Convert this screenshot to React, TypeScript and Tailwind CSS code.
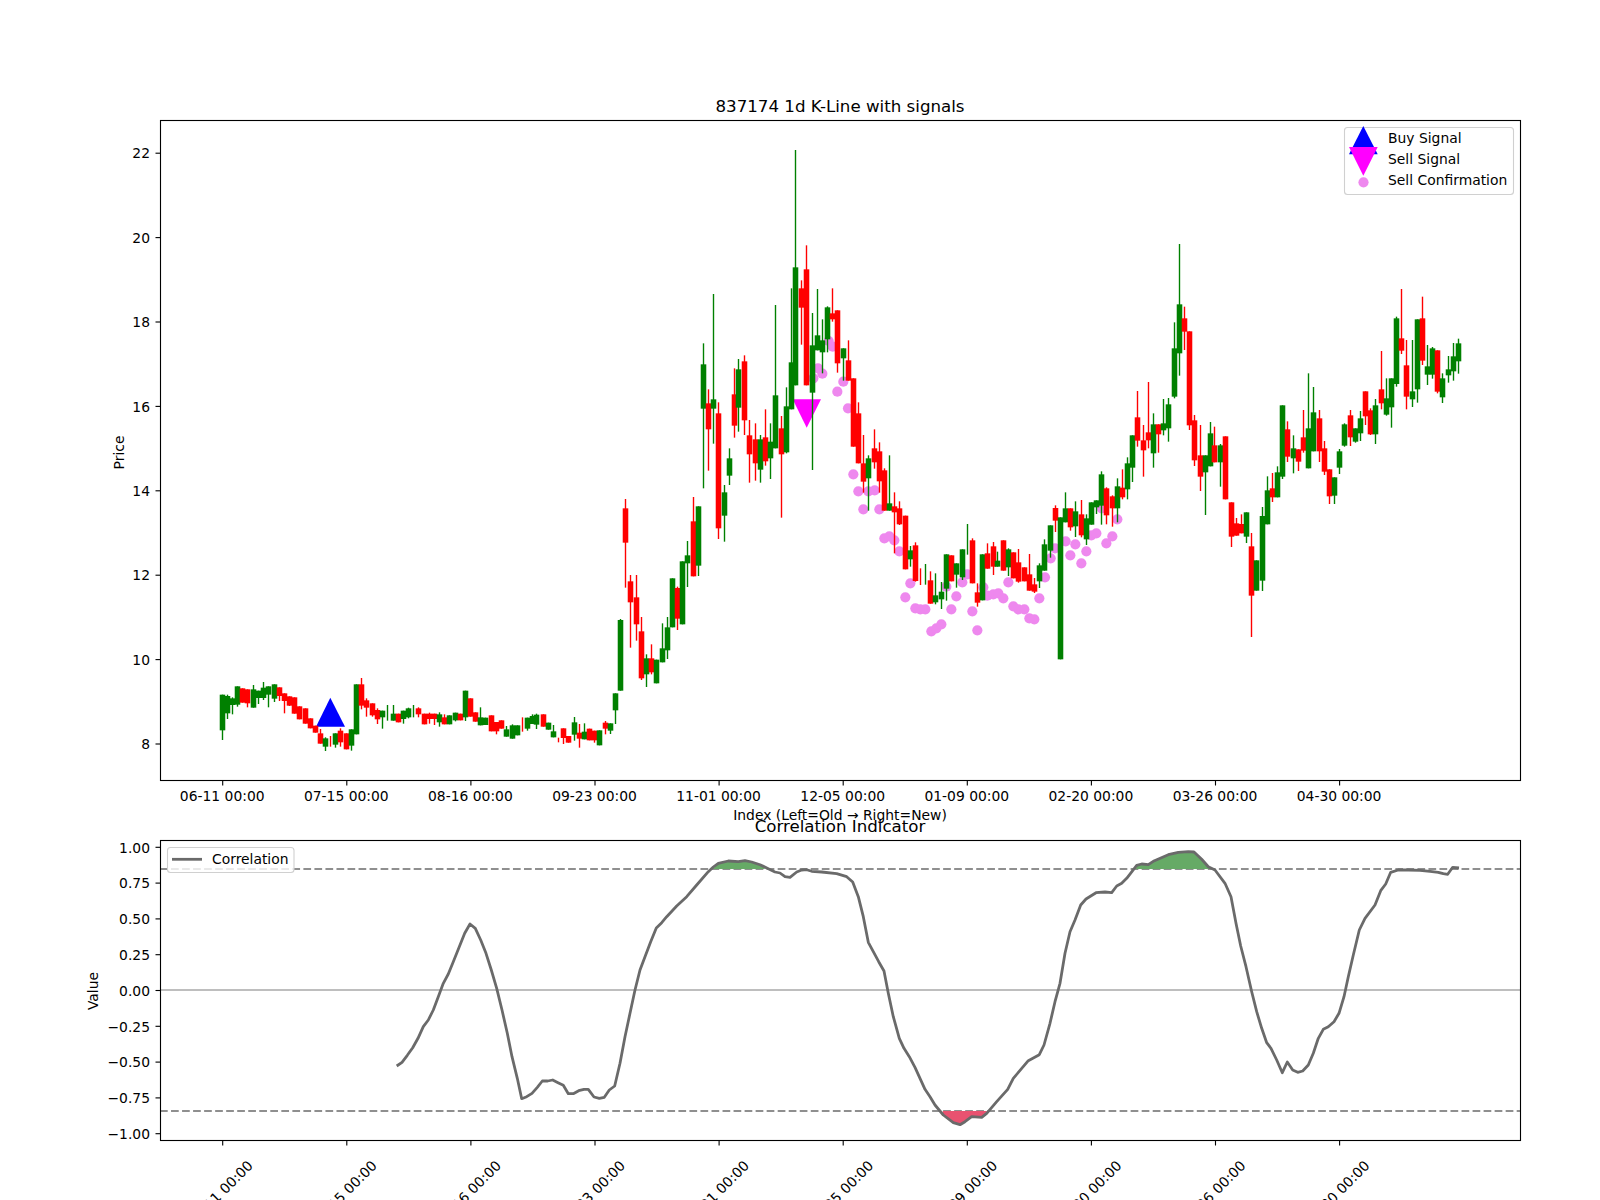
type Row = [string, number, number, number, number, number];
type Candle = { x: number; c: string; wt: number; wb: number; bt: number; bb: number };

const seg = (ox: number, oy: number, rows: Row[]): Candle[] =>
  rows.map(([c, x, bt, bb, wt, wb]) => ({
    x: Math.floor(ox + x / 3) + 0.5,
    c: c === "g" ? "#008000" : "#ff0000",
    wt: oy + wt / 3,
    wb: oy + wb / 3,
    bt: oy + bt / 3,
    bb: oy + bb / 3,
  }));

const candles: Candle[] = [
  ...seg(150, 620, [
    ["g", 216, 224, 331, 224, 360], ["g", 231, 228, 280, 224, 297], ["g", 246, 235, 255, 232, 283],
    ["g", 261, 199, 254, 199, 260], ["r", 278, 205, 248, 205, 248], ["r", 293, 208, 250, 208, 262],
    ["g", 309, 208, 263, 195, 263], ["g", 325, 212, 234, 212, 252], ["g", 340, 203, 234, 186, 240],
    ["g", 354, 199, 224, 199, 262], ["g", 372, 193, 236, 193, 246], ["r", 387, 202, 228, 202, 243],
    ["r", 402, 220, 243, 220, 280], ["r", 417, 229, 257, 229, 258], ["r", 432, 232, 281, 232, 281],
    ["r", 447, 259, 298, 259, 298], ["r", 465, 265, 311, 265, 311], ["r", 480, 295, 325, 295, 325],
    ["r", 495, 317, 338, 317, 338], ["r", 510, 340, 371, 327, 371], ["g", 525, 355, 380, 352, 393],
    ["r", 541, 360, 360, 348, 380], ["g", 557, 340, 374, 340, 383], ["r", 572, 332, 367, 325, 380],
    ["r", 588, 340, 388, 340, 388], ["g", 603, 328, 377, 328, 392], ["g", 618, 193, 343, 193, 343],
    ["r", 633, 193, 257, 174, 268], ["r", 650, 241, 263, 235, 290], ["r", 666, 250, 286, 250, 290],
    ["r", 681, 270, 298, 265, 312], ["g", 696, 272, 292, 272, 326], ["g", 712, 280, 280, 255, 302],
    ["g", 729, 281, 302, 255, 302], ["r", 744, 281, 307, 281, 307], ["g", 759, 272, 297, 272, 311],
    ["g", 774, 265, 292, 263, 295], ["g", 789, 270, 270, 255, 292], ["r", 804, 265, 283, 262, 292],
    ["r", 822, 281, 313, 281, 313], ["r", 837, 281, 297, 278, 311], ["r", 852, 281, 297, 281, 315],
    ["g", 867, 283, 307, 277, 320], ["r", 882, 292, 313, 283, 313], ["g", 897, 286, 313, 286, 313],
    ["g", 915, 278, 301, 278, 304], ["r", 930, 281, 301, 281, 301], ["g", 945, 212, 292, 212, 303],
    ["r", 960, 235, 290, 235, 290], ["r", 975, 277, 305, 277, 305], ["g", 990, 292, 316, 262, 316],
    ["g", 1007, 293, 315, 293, 315], ["r", 1023, 286, 334, 286, 334], ["r", 1038, 306, 334, 306, 343],
    ["r", 1053, 301, 326, 301, 326], ["g", 1068, 328, 350, 318, 350], ["g", 1086, 316, 356, 313, 356],
    ["g", 1101, 316, 346, 316, 346], ["r", 1117, 310, 310, 292, 335], ["g", 1131, 293, 326, 293, 332],
    ["g", 1146, 288, 312, 283, 312], ["g", 1160, 284, 314, 281, 327], ["r", 1179, 283, 320, 283, 320],
    ["g", 1194, 308, 329, 308, 329], ["g", 1209, 334, 352, 315, 352], ["r", 1225, 360, 360, 353, 367],
    ["r", 1240, 325, 354, 325, 372], ["r", 1254, 348, 368, 348, 368], ["g", 1272, 307, 344, 291, 362],
    ["r", 1288, 338, 356, 312, 383], ["g", 1302, 335, 358, 310, 358], ["r", 1317, 326, 361, 326, 361],
    ["r", 1332, 332, 361, 332, 368], ["g", 1347, 331, 376, 331, 376], ["r", 1365, 308, 326, 303, 343],
    ["g", 1380, 310, 332, 310, 342], ["g", 1395, 220, 271, 220, 312],
  ]),
  ...seg(540, 400, [
    ["g", 240, 660, 872, 657, 872], ["r", 255, 325, 428, 297, 563], ["r", 270, 544, 607, 525, 743],
    ["r", 288, 592, 673, 525, 722], ["r", 303, 694, 835, 651, 840], ["g", 318, 775, 823, 763, 861],
    ["r", 333, 775, 817, 733, 823], ["g", 348, 779, 850, 779, 850], ["g", 366, 745, 787, 670, 787],
    ["g", 381, 682, 751, 651, 777], ["g", 396, 535, 682, 535, 682], ["r", 411, 564, 656, 560, 690],
    ["g", 426, 484, 673, 484, 673], ["g", 441, 466, 490, 423, 561], ["r", 459, 364, 529, 291, 529],
    ["g", 474, 319, 497, 319, 528],
  ]),
  ...seg(640, 130, [
    ["g", 189, 703, 836, 640, 1075], ["r", 204, 820, 898, 778, 1022], ["g", 220, 808, 836, 492, 941],
    ["r", 234, 850, 1195, 817, 1227], ["g", 253, 1087, 1157, 1065, 1235], ["g", 267, 985, 1037, 955, 1065],
    ["r", 282, 793, 887, 715, 923], ["g", 296, 718, 833, 687, 905], ["r", 312, 694, 871, 676, 915],
    ["r", 327, 916, 973, 870, 1058], ["r", 345, 928, 1000, 880, 1052], ["g", 360, 928, 1019, 915, 1058],
    ["r", 375, 922, 994, 838, 1007], ["g", 390, 935, 985, 880, 1047], ["g", 405, 796, 955, 525, 955],
    ["r", 423, 895, 973, 858, 1163], ["g", 438, 829, 967, 772, 970], ["g", 453, 697, 838, 475, 838],
    ["g", 467, 412, 766, 60, 766], ["r", 483, 475, 533, 451, 644], ["r", 498, 418, 766, 346, 766],
    ["g", 516, 646, 788, 549, 1020], ["g", 531, 616, 661, 477, 661], ["g", 546, 631, 667, 568, 730],
    ["g", 561, 532, 628, 529, 667], ["r", 576, 550, 568, 475, 575], ["r", 591, 541, 700, 541, 728],
    ["g", 609, 655, 685, 655, 752], ["r", 624, 691, 752, 631, 752],
  ]),
  ...seg(840, 400, [
    ["r", 39, -65, 140, -65, 140], ["r", 54, 40, 190, 7, 190], ["r", 69, 190, 245, 105, 278],
    ["g", 84, 175, 235, 166, 332], ["r", 102, 145, 187, 88, 206], ["r", 117, 154, 244, 127, 278],
    ["r", 132, 211, 332, 205, 332], ["g", 147, 310, 332, 166, 332], ["r", 162, 319, 337, 277, 460],
    ["r", 177, 325, 373, 304, 375], ["r", 195, 347, 508, 347, 508], ["g", 210, 451, 478, 438, 500],
    ["r", 225, 436, 543, 427, 545], ["r", 241, 530, 530, 505, 555], ["g", 256, 520, 520, 492, 554],
    ["r", 272, 541, 611, 514, 611], ["g", 287, 586, 607, 520, 613], ["g", 303, 575, 598, 546, 627],
    ["g", 318, 463, 566, 463, 602], ["r", 333, 466, 544, 466, 544], ["g", 348, 490, 524, 490, 563],
    ["g", 366, 448, 532, 448, 540], ["g", 381, 420, 420, 372, 464], ["r", 396, 421, 550, 415, 550],
    ["r", 411, 577, 608, 550, 620], ["g", 426, 463, 601, 463, 601], ["r", 441, 460, 506, 430, 506],
    ["r", 459, 439, 500, 426, 525], ["g", 473, 482, 500, 455, 500], ["r", 489, 421, 512, 421, 512],
    ["g", 504, 448, 502, 445, 528], ["r", 519, 457, 535, 457, 535], ["r", 534, 487, 545, 447, 548],
    ["r", 552, 502, 544, 502, 544], ["r", 567, 523, 572, 462, 572], ["r", 582, 553, 575, 534, 579],
    ["g", 597, 496, 544, 490, 564], ["g", 612, 433, 512, 418, 512], ["g", 630, 376, 452, 376, 473],
    ["r", 645, 324, 362, 316, 396], ["g", 660, 352, 778, 352, 778], ["g", 675, 325, 367, 277, 367],
    ["r", 690, 325, 382, 325, 392], ["g", 705, 334, 379, 304, 411], ["r", 723, 343, 406, 300, 412],
    ["g", 738, 355, 418, 343, 435], ["g", 753, 307, 374, 307, 374], ["g", 768, 301, 322, 301, 342],
    ["g", 783, 223, 317, 214, 374], ["r", 798, 265, 346, 262, 373], ["r", 816, 289, 325, 286, 380],
    ["g", 831, 259, 325, 235, 367], ["r", 846, 263, 292, 208, 298], ["g", 861, 190, 268, 172, 298],
    ["g", 876, 106, 203, 106, 246],
  ]),
  ...seg(1130, 380, [
    ["r", 21, 112, 182, 33, 200], ["r", 39, 181, 211, 135, 290], ["r", 54, 157, 181, 6, 205],
    ["g", 69, 133, 220, 100, 263], ["r", 84, 133, 163, 133, 218], ["g", 99, 130, 151, 57, 166],
    ["g", 114, 73, 145, 54, 185], ["g", 132, -95, 50, -173, 55], ["g", 147, -227, -80, -408, -13],
    ["r", 162, -185, -145, -220, -90], ["r", 177, -146, 136, -146, 150], ["r", 192, 121, 241, 105, 258],
    ["r", 210, 226, 290, 135, 333], ["g", 225, 226, 277, 226, 405], ["g", 240, 160, 259, 126, 259],
    ["r", 254, 196, 247, 140, 247], ["g", 270, 196, 247, 192, 320], ["r", 285, 169, 358, 169, 358],
    ["r", 303, 367, 470, 367, 501], ["r", 318, 430, 467, 414, 467], ["r", 333, 432, 460, 403, 460],
    ["g", 348, 397, 470, 397, 489], ["r", 363, 499, 647, 459, 771], ["g", 378, 541, 632, 541, 632],
    ["g", 396, 408, 602, 381, 633], ["g", 411, 331, 433, 289, 433], ["r", 426, 325, 352, 279, 366],
    ["g", 441, 277, 352, 259, 352], ["g", 456, 76, 290, 76, 297], ["r", 471, 148, 230, 124, 246],
    ["g", 489, 205, 235, 166, 280], ["r", 504, 208, 245, 208, 273], ["r", 519, 172, 212, 90, 218],
    ["g", 534, 145, 265, -20, 265], ["g", 549, 97, 214, 21, 214], ["r", 567, 115, 214, 90, 246],
    ["r", 582, 205, 275, 183, 285], ["r", 597, 268, 349, 268, 372], ["g", 612, 292, 347, 292, 372],
    ["g", 627, 214, 263, 207, 282], ["g", 642, 133, 197, 130, 200], ["r", 660, 106, 172, 90, 198],
    ["g", 675, 145, 185, 145, 188], ["g", 690, 115, 160, 93, 183], ["r", 705, 34, 109, 34, 135],
    ["r", 720, 91, 163, 85, 165], ["g", 735, 76, 163, 57, 192], ["r", 753, 28, 70, -87, 88],
    ["g", 768, 55, 104, -5, 107], ["g", 783, -5, 82, -5, 143], ["g", 798, -185, 12, -190, 20],
    ["r", 813, -125, -88, -273, -78], ["r", 828, -44, 50, -120, 88], ["g", 846, 34, 58, -120, 81],
    ["g", 861, -182, 28, -182, 68], ["r", 876, -185, -58, -250, -45], ["g", 891, -41, -16, -105, 15],
    ["g", 906, -95, -16, -99, -4], ["r", 921, -89, 35, -89, 40], ["g", 938, -5, 52, -20, 69],
    ["g", 954, -32, -14, -72, 8], ["g", 969, -71, -26, -111, 2], ["g", 984, -110, -56, -124, -19],
  ]),
];

const pts = (ox: number, oy: number, raw: number[][]) => raw.map(([x, y]) => [ox + x / 3, oy + y / 3]);

const dots = [
  ...pts(640, 130, [[520, 745], [534, 715], [547, 731], [566, 633], [578, 650], [610, 755], [592, 785]]),
  ...pts(840, 400, [
    [24, 25], [40, 223], [55, 274], [85, 274], [104, 271], [70, 328], [118, 328], [133, 415], [148, 409], [163, 421],
    [178, 454], [211, 550], [196, 592], [226, 625], [241, 628], [256, 628], [274, 694], [289, 685], [304, 673], [319, 560],
    [349, 589], [334, 628], [367, 547], [382, 523], [397, 634], [412, 691], [430, 562], [442, 587], [460, 583], [475, 580],
    [490, 595], [505, 547], [520, 619], [535, 628], [553, 628], [568, 655], [583, 658], [598, 595], [615, 532], [632, 475],
    [645, 445], [677, 424], [691, 466], [706, 433], [724, 490], [739, 454], [754, 406], [769, 400], [785, 325], [799, 430],
    [817, 409], [832, 358],
  ]),
];

const line1 = pts(80, 820, [
  [950, 738], [966, 727], [982, 706], [998, 683], [1014, 655], [1030, 620], [1045, 600], [1060, 570], [1075, 530], [1090, 490],
  [1105, 462], [1120, 425], [1138, 380], [1154, 340], [1170, 312], [1186, 325], [1202, 360], [1218, 400], [1234, 450], [1250, 505],
  [1266, 570], [1282, 640], [1296, 710], [1312, 775], [1325, 836], [1340, 830], [1356, 820], [1372, 802], [1387, 783], [1403, 783],
  [1418, 780], [1434, 788], [1450, 796], [1465, 821], [1480, 821], [1496, 812],
]);
const line2 = pts(580, 820, [
  [12, 808], [25, 808], [42, 831], [58, 835], [73, 832], [88, 810], [104, 798], [120, 730], [135, 650], [150, 580],
  [165, 510], [180, 450], [195, 410], [212, 365], [229, 324], [245, 308], [260, 290], [290, 258], [320, 230], [350, 195],
  [385, 155], [400, 141], [415, 130], [445, 123], [475, 125], [495, 122], [515, 126], [540, 134], [565, 146], [585, 156],
  [600, 159], [615, 170], [630, 172], [650, 156], [665, 150], [680, 149], [695, 154], [725, 156], [770, 161], [800, 170],
  [818, 186], [835, 230], [850, 290], [865, 367], [880, 395], [896, 425], [912, 453], [925, 520], [940, 590], [958, 655],
  [972, 685], [988, 710], [1005, 742], [1035, 808], [1050, 830], [1065, 855], [1090, 885], [1120, 908], [1140, 914], [1155, 905],
  [1175, 890], [1205, 892], [1220, 880], [1250, 845], [1283, 808], [1300, 775], [1345, 722], [1378, 704], [1392, 675], [1410, 610],
  [1425, 545],
]);
const line3 = pts(1060, 820, [
  [0, 490], [15, 400], [30, 335], [45, 300], [62, 255], [78, 237], [108, 218], [135, 216], [155, 218], [170, 198],
  [185, 190], [200, 175], [230, 136], [245, 132], [265, 134], [280, 124], [325, 104], [355, 97], [385, 95], [402, 96],
  [425, 118], [445, 140], [465, 150], [495, 190], [513, 230], [528, 310], [542, 378], [558, 440], [575, 515], [590, 575],
  [605, 625], [620, 668], [633, 685], [650, 720], [667, 758], [682, 726], [698, 750], [713, 757], [728, 753], [745, 735],
  [760, 700], [775, 655], [790, 628], [805, 620], [822, 605], [837, 580], [852, 530], [865, 470], [880, 405], [898, 330],
  [915, 295], [945, 255], [962, 212], [977, 192], [992, 157], [1015, 150], [1045, 150], [1080, 151], [1110, 154], [1135, 157],
  [1150, 161], [1163, 163], [1178, 142], [1197, 144],
]);
const corr = [...line1, ...line2, ...line3];
const toStr = (p: number[][]) => p.map((q) => `${q[0].toFixed(1)},${q[1].toFixed(1)}`).join(" ");

const fillG1 = pts(580, 820, [[398, 147], [415, 130], [445, 123], [475, 125], [495, 122], [515, 126], [540, 134], [556, 147]]);
const fillR = pts(580, 820, [[1088, 873], [1090, 885], [1120, 908], [1140, 914], [1155, 905], [1175, 890], [1205, 892], [1222, 873]]);
const fillG2 = pts(1060, 820, [[228, 147], [230, 136], [245, 132], [265, 134], [280, 124], [325, 104], [355, 97], [385, 95], [402, 96], [425, 118], [445, 140], [455, 147]]);

const ticksX = [222.7, 346.8, 470.9, 595, 719.1, 843.2, 967.3, 1091.4, 1215.5, 1339.6];
const labels = ["06-11 00:00", "07-15 00:00", "08-16 00:00", "09-23 00:00", "11-01 00:00", "12-05 00:00", "01-09 00:00", "02-20 00:00", "03-26 00:00", "04-30 00:00"];
const priceTicks = [8, 10, 12, 14, 16, 18, 20, 22];
const valueTicks = ["1.00", "0.75", "0.50", "0.25", "0.00", "−0.25", "−0.50", "−0.75", "−1.00"];

export default function App() {
  return (
    <div className="flex flex-col w-[1600px] h-[1200px] bg-white overflow-hidden font-['DejaVu_Sans',sans-serif] text-black">
      <svg width={1600} height={820} viewBox="0 0 1600 820" className="block shrink-0 overflow-visible">
        <text x={840} y={111.5} textAnchor="middle" className="text-[16.67px]">837174 1d K-Line with signals</text>
        {dots.map((d, i) => (
          <circle key={i} cx={d[0]} cy={d[1]} r={5.1} fill="#ee88ee" />
        ))}
        <polygon points="330.3,697.7 316,726.7 345,726.7" fill="#0000ff" />
        <polygon points="792.7,399.3 821,399.3 806.7,427.7" fill="#ff00ff" />
        {candles.map((k, i) => (
          <g key={i}>
            <line x1={k.x} x2={k.x} y1={k.wt} y2={k.wb} stroke={k.c} strokeWidth={1.39} />
            {k.bb > k.bt && <rect x={k.x - 2.78} y={k.bt} width={5.56} height={k.bb - k.bt} fill={k.c} />}
          </g>
        ))}
        <rect x={160.5} y={120.5} width={1360} height={660} fill="none" stroke="#000" strokeWidth={1.11} />
        {ticksX.map((x, i) => (
          <g key={i}>
            <line x1={x} x2={x} y1={781} y2={785.5} stroke="#000" strokeWidth={1.11} />
            <text x={x - 0.5} y={801} textAnchor="middle" className="text-[13.89px]">{labels[i]}</text>
          </g>
        ))}
        {priceTicks.map((p) => {
          const y = 744 - (p - 8) * 42.2;
          return (
            <g key={p}>
              <line x1={155.5} x2={160} y1={y} y2={y} stroke="#000" strokeWidth={1.11} />
              <text x={150} y={y + 5.2} textAnchor="end" className="text-[13.89px]">{p}</text>
            </g>
          );
        })}
        <text transform="translate(124 452.5) rotate(-90)" textAnchor="middle" className="text-[13.89px]">Price</text>
        <text x={840} y={820} textAnchor="middle" className="text-[13.89px]">Index (Left=Old → Right=New)</text>
        <rect x={1344.5} y={127.5} width={169} height={67} rx={3} fill="#ffffff" fillOpacity={0.8} stroke="#d0d0d0" strokeWidth={1.1} />
        <polygon points="1363.3,126 1349,154.3 1377.7,154.3" fill="#0000ff" />
        <polygon points="1349,147 1377.7,147 1363.3,175.7" fill="#ff00ff" />
        <circle cx={1363.5} cy={182.3} r={5.1} fill="#ee88ee" />
        <text x={1388} y={143} className="text-[13.89px]">Buy Signal</text>
        <text x={1388} y={164} className="text-[13.89px]">Sell Signal</text>
        <text x={1388} y={185} className="text-[13.89px]">Sell Confirmation</text>
      </svg>
      <svg width={1600} height={380} viewBox="0 820 1600 380" className="block shrink-0 overflow-visible">
        <text x={840} y={832} textAnchor="middle" className="text-[16.67px]">Correlation Indicator</text>
        <line x1={160} x2={1520} y1={990} y2={990} stroke="#a9a9a9" strokeWidth={1.6} />
        <line x1={160} x2={1520} y1={869} y2={869} stroke="#8f8f8f" strokeWidth={2.08} strokeDasharray="7.7 3.33" />
        <line x1={160} x2={1520} y1={1111} y2={1111} stroke="#8f8f8f" strokeWidth={2.08} strokeDasharray="7.7 3.33" />
        <polygon points={toStr(fillG1)} fill="#66aa66" />
        <polygon points={toStr(fillG2)} fill="#66aa66" />
        <polygon points={toStr(fillR)} fill="#e85270" />
        <polyline points={toStr(corr)} fill="none" stroke="#6a6a6a" strokeWidth={2.78} strokeLinejoin="round" />
        <rect x={160.5} y={840.5} width={1360} height={300} fill="none" stroke="#000" strokeWidth={1.11} />
        {ticksX.map((x, i) => (
          <g key={i}>
            <line x1={x} x2={x} y1={1141} y2={1145.5} stroke="#000" strokeWidth={1.11} />
            <text transform={`translate(${x + 31} 1166.5) rotate(-45)`} textAnchor="end" className="text-[13.89px]">{labels[i]}</text>
          </g>
        ))}
        {valueTicks.map((t, i) => {
          const y = 847.3 + i * 35.8;
          return (
            <g key={t}>
              <line x1={155.5} x2={160} y1={y} y2={y} stroke="#000" strokeWidth={1.11} />
              <text x={150} y={y + 5.2} textAnchor="end" className="text-[13.89px]">{t}</text>
            </g>
          );
        })}
        <text transform="translate(98 991) rotate(-90)" textAnchor="middle" className="text-[13.89px]">Value</text>
        <rect x={167.5} y={847.5} width={126.5} height={25} rx={3} fill="#ffffff" fillOpacity={0.8} stroke="#d0d0d0" strokeWidth={1.1} />
        <line x1={172} x2={202} y1={859.3} y2={859.3} stroke="#6a6a6a" strokeWidth={2.78} />
        <text x={212} y={864} className="text-[13.89px]">Correlation</text>
      </svg>
    </div>
  );
}
